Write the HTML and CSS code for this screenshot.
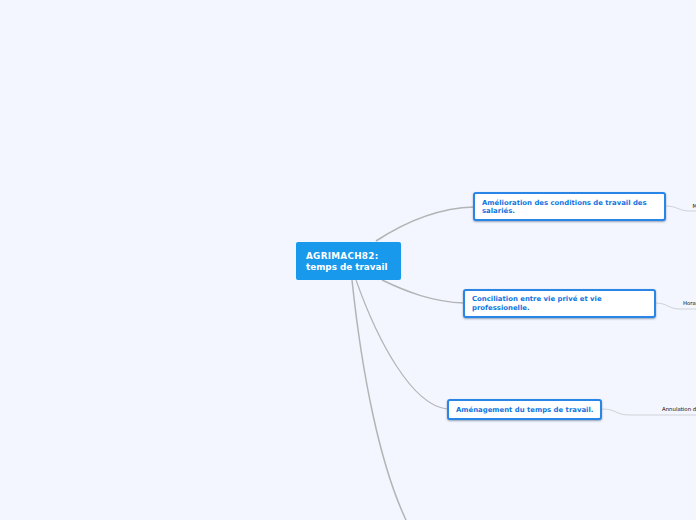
FILE: index.html
```
<!DOCTYPE html>
<html lang="fr">
<head>
<meta charset="utf-8">
<title>AGRIMACH82: temps de travail</title>
<link rel="stylesheet" href="styles.css">
</head>
<body>
<main class="canvas">
  <svg class="links" width="696" height="520" viewBox="0 0 696 520" aria-hidden="true">
    <path class="trunk" d="M376 241C402 224 436 208 474 207"/>
    <path class="trunk" d="M382 280C407 292 433 302 464 303"/>
    <path class="trunk thin" d="M356 280C378 342 412 405 447 409"/>
    <path class="trunk" d="M352 280C362 375 380 465 406 520"/>
    <path class="twig" d="M665 206C678 206 678 211 690 211H696"/>
    <path class="twig" d="M655 303C668 303 668 309 680 309H696"/>
    <path class="twig" d="M602 409C617 409 615 415 630 415H696"/>
  </svg>
  <div class="node root">AGRIMACH82:<br>temps de travail</div>
  <div class="node topic topic-1">Amélioration des conditions de travail des salariés.</div>
  <div class="node topic topic-2">Conciliation entre vie privé et vie professionelle.</div>
  <div class="node topic topic-3">Aménagement du temps de travail.</div>
  <div class="leaf leaf-1">M</div>
  <div class="leaf leaf-2">Hora</div>
  <div class="leaf leaf-3">Annulation d</div>
</main>
</body>
</html>
```
FILE: styles.css
```
html, body {
  margin: 0;
  padding: 0;
  overflow: hidden;
  background: #f3f6fe;
}
.canvas {
  position: relative;
  width: 696px;
  height: 520px;
  overflow: hidden;
  background: #f3f6fe;
  font-family: "DejaVu Sans", sans-serif;
}
.links {
  position: absolute;
  left: 0;
  top: 0;
}
.links path {
  fill: none;
}
.trunk {
  stroke: #b3b4b6;
  stroke-width: 1.5;
}
.thin {
  stroke-width: 1.2;
}
.twig {
  stroke: #d0d2d6;
  stroke-width: 1;
}
.node {
  position: absolute;
  box-sizing: border-box;
  font-weight: 700;
}
.root {
  left: 296px;
  top: 242px;
  width: 105px;
  height: 38px;
  padding: 9px 10px;
  border-radius: 2px;
  background: #1899eb;
  color: #fff;
  font-size: 8.8px;
  line-height: 11px;
}
.root::first-line {
  letter-spacing: 0.3px;
}
.topic {
  display: flex;
  align-items: center;
  padding: 0 7px;
  background: #fff;
  border: 2px solid #2a86e6;
  border-radius: 3px;
  box-shadow: 0 1px 2px rgba(60, 80, 110, 0.5);
  color: #0f74e0;
  font-size: 6.9px;
  line-height: 8px;
}
.topic-1 {
  left: 473px;
  top: 192px;
  width: 193px;
  height: 29px;
}
.topic-2 {
  left: 463px;
  top: 289px;
  width: 193px;
  height: 29px;
  line-height: 9px;
}
.topic-3 {
  left: 447px;
  top: 399px;
  width: 155px;
  height: 21px;
  white-space: nowrap;
}
.leaf {
  position: absolute;
  color: #111;
  font-size: 5.4px;
  line-height: 6px;
  white-space: nowrap;
}
.leaf-1 {
  left: 692.5px;
  top: 203px;
}
.leaf-2 {
  left: 683px;
  top: 300px;
}
.leaf-3 {
  left: 662px;
  top: 406px;
}
```
